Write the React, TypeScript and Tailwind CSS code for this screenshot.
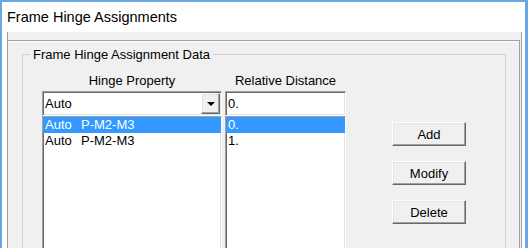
const sunken =
  'border border-t-[#a0a0a0] border-l-[#a0a0a0] border-b-white border-r-white shadow-[inset_1px_1px_0_#696969,inset_-1px_-1px_0_#e3e3e3]';
const raised =
  'border border-t-white border-l-white border-b-[#696969] border-r-[#696969] shadow-[inset_-1px_-1px_0_#a0a0a0,inset_1px_1px_0_#e3e3e3]';

const hinges = [
  { prop: 'P-M2-M3', dist: '0.' },
  { prop: 'P-M2-M3', dist: '1.' },
];

function ListRow({ selected, children }: { selected: boolean; children: React.ReactNode }) {
  return (
    <div
      className={`h-[16px] pl-[2px] leading-[16px] whitespace-pre ${selected ? 'bg-[#3399ff] text-white' : 'text-black'}`}
    >
      {children}
    </div>
  );
}

function DialogButton({ label }: { label: string }) {
  return (
    <button
      type="button"
      className={`h-[24px] w-[74px] bg-[#f0f0f0] text-[13px] leading-none text-black ${raised}`}
    >
      {label}
    </button>
  );
}

export default function App() {
  const selected = 0;

  return (
    <div className="flex h-[248px] w-[528px] flex-col overflow-hidden border-t-2 border-r-[3px] border-l-2 border-[#6aa6e6] bg-white font-['Liberation_Sans',Arial,sans-serif] text-[13px] text-black">
      <div className="flex h-[30px] shrink-0 items-center pl-[5px] text-[14.5px] leading-none">
        Frame Hinge Assignments
      </div>

      <div className="flex min-h-0 flex-1 pr-[3px] pl-[5px]">
        <div className="flex flex-1 flex-col border-r border-l border-[#a0a0a0] bg-[#f0f0f0] pt-[8px]">
          <div className="mr-[1px] flex flex-1 flex-col border-t border-r border-[#a0a0a0] shadow-[inset_0_1px_0_#fff]">
            <fieldset className="mt-[6px] mr-[13px] ml-[14px] flex-1 border border-[#d0d0d0]">
              <legend className="ml-[7px] px-[3px] leading-[15px]">Frame Hinge Assignment Data</legend>

              <div className="flex pt-[11px] pl-[19px]">
                {/* hinge property column */}
                <div className="flex w-[180px] flex-col">
                  <div className="h-[15px] text-center leading-[15px]">Hinge Property</div>
                  <div className={`mt-[3px] flex h-[25px] items-center bg-white ${sunken}`}>
                    <span className="pl-[2px] leading-none">Auto</span>
                    <div className={`mr-[1px] ml-auto flex h-[21px] w-[19px] items-center justify-center bg-[#f0f0f0] ${raised}`}>
                      <div className="h-0 w-0 border-t-[4px] border-r-[4px] border-l-[4px] border-t-black border-r-transparent border-l-transparent" />
                    </div>
                  </div>
                  <div className={`h-[160px] bg-white ${sunken}`}>
                    {hinges.map((h, i) => (
                      <ListRow key={i} selected={i === selected}>
                        <span className="inline-block w-[36px]">Auto</span>
                        {h.prop}
                      </ListRow>
                    ))}
                  </div>
                </div>

                {/* relative distance column */}
                <div className="ml-[3px] flex w-[121px] flex-col">
                  <div className="h-[15px] text-center leading-[15px]">Relative Distance</div>
                  <div className={`mt-[3px] flex h-[25px] items-center bg-white ${sunken}`}>
                    <span className="pl-[2px] leading-none">0.</span>
                  </div>
                  <div className={`h-[160px] bg-white ${sunken}`}>
                    {hinges.map((h, i) => (
                      <ListRow key={i} selected={i === selected}>
                        {h.dist}
                      </ListRow>
                    ))}
                  </div>
                </div>

                <div className="ml-[46px] flex flex-col gap-[15px] pt-[49px]">
                  <DialogButton label="Add" />
                  <DialogButton label="Modify" />
                  <DialogButton label="Delete" />
                </div>
              </div>
            </fieldset>
          </div>
        </div>
      </div>
    </div>
  );
}
